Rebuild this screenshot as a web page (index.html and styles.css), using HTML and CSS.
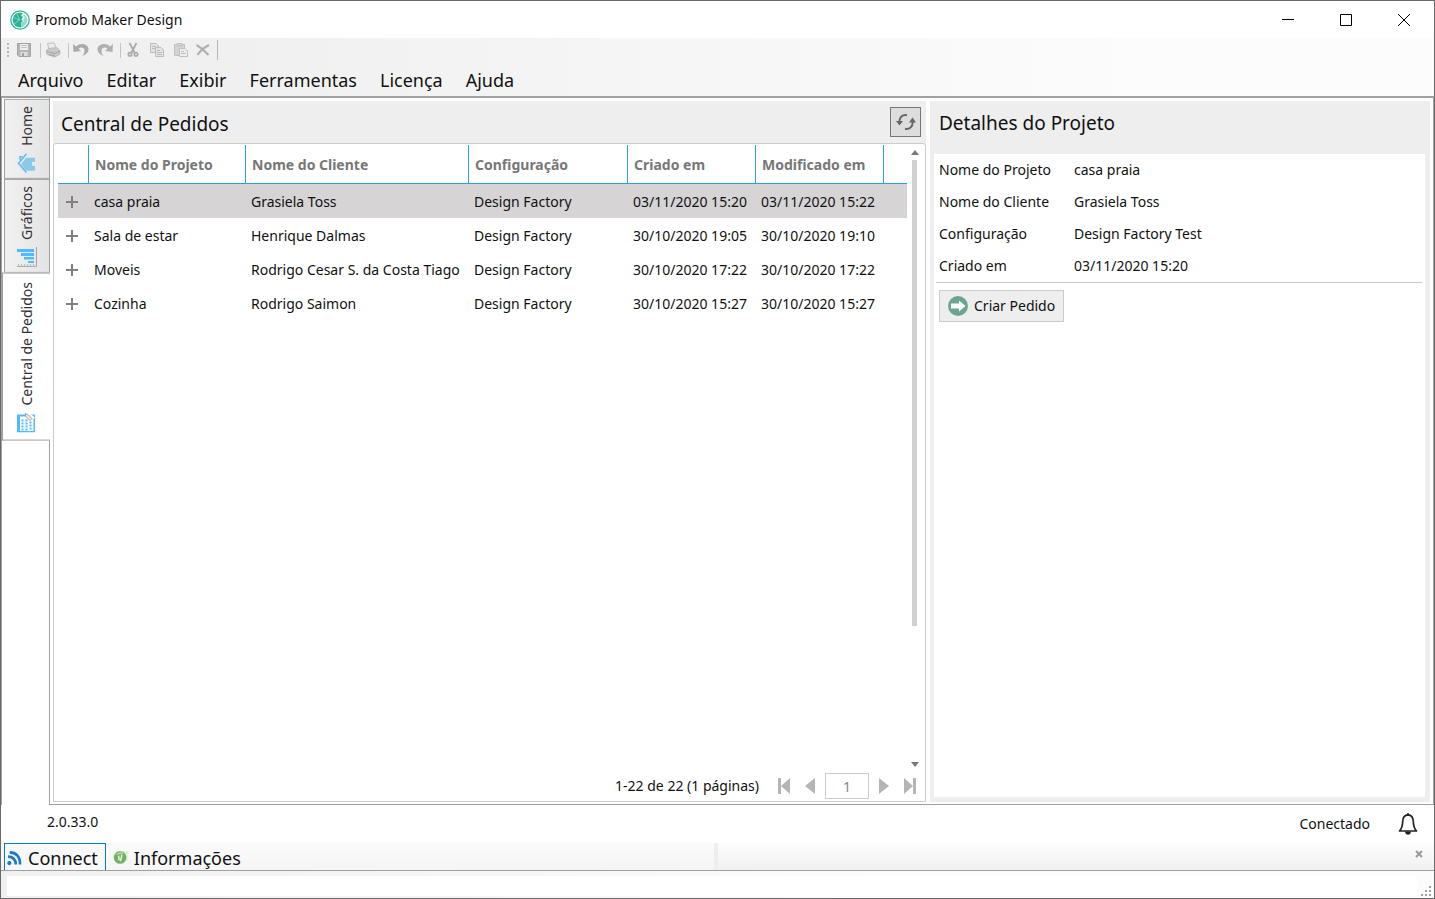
FILE: index.html
```
<!DOCTYPE html>
<html lang="pt-BR">
<head>
<meta charset="utf-8">
<title>Promob Maker Design</title>
<link rel="stylesheet" href="styles.css">
</head>
<body>
<div class="window">
  <header class="titlebar">
    <svg class="logo" viewBox="0 0 20 20"><circle cx="10" cy="10" r="9.200" fill="#fff" stroke="#2db79a" stroke-width="1.300"/><path d="M10 2.500A7.500 7.500 0 0 0 7.500 17L11 17.400V12.500L13 11.500L11.500 9.500L13 7L11 5.500L13 3.200Q11.500 2.500 10 2.500Z" fill="#27b496"/><path d="M14 4Q18 7 17 12Q15 17 11 17.400V12.500L14 11.500L13 9.500L15 7.500L13 6Z" fill="#8edccb"/><path d="M9.500 10L3.500 7.500M9.500 10L4 14M9.500 10L7 4" stroke="#8edccb" stroke-width=".8"/></svg>
    <h1 class="title">Promob Maker Design</h1>
    <div class="caption-buttons">
      <button class="caption" aria-label="Minimizar"><svg viewBox="0 0 12 12"><path d="M0 5.500H12" /></svg></button>
      <button class="caption" aria-label="Maximizar"><svg viewBox="0 0 12 12"><path d="M.5.5H11.500V11.500H.5Z"/></svg></button>
      <button class="caption" aria-label="Fechar"><svg viewBox="0 0 12 12"><path d="M0 0L12 12M12 0L0 12"/></svg></button>
    </div>
  </header>

  <div class="topbars">
    <div class="toolbar">
      <span class="grip"></span>
      <button class="tool save" aria-label="Salvar"><svg viewBox="0 0 16 16"><path d="M1.500 1.500H14.500V14.500H3L1.500 13Z" fill="#b5b5b5" stroke="#a3a3a3"/><path d="M4 2H12V8H4Z" fill="#eee"/><path d="M5 3.500H11M5 5.500H11" stroke="#c4c4c4"/><path d="M4.500 10H11.500V14H4.500Z" fill="#ddd"/><path d="M6 11H8V14H6Z" fill="#a0a0a0"/></svg></button>
      <span class="sep"></span>
      <button class="tool" aria-label="Imprimir"><svg viewBox="0 0 16 16"><path d="M4 7L2.500 1.500L9 .8L11.500 6.500Z" fill="#ececec" stroke="#c0c0c0"/><path d="M1 8.500L4 6.500L12 5.500L15 9V12L10 15L2 12.500Z" fill="#cacaca" stroke="#bbb"/><path d="M2 9.500L10 11.500L15 9M4 12.500L10 14" stroke="#a3a3a3" fill="none"/></svg></button>
      <span class="sep"></span>
      <button class="tool" aria-label="Desfazer"><svg viewBox="0 0 16 16"><path d="M0 2L.5 10L8 9L5.500 6.500C8 4.500 11.500 5.500 11.500 8.500C11.500 10.500 11 12 9.500 14C14 12 16 9.500 15.500 6.500C14.500 1.500 7 .5 3 4.500Z" fill="#aaa"/></svg></button>
      <button class="tool" aria-label="Refazer"><svg viewBox="0 0 16 16"><path d="M16 2L15.500 10L8 9L10.500 6.500C8 4.500 4.500 5.500 4.500 8.500C4.500 10.500 5 12 6.500 14C2 12 0 9.500.5 6.500C1.500 1.500 9 .5 13 4.500Z" fill="#b0b0b0"/></svg></button>
      <span class="sep"></span>
      <button class="tool" aria-label="Recortar"><svg viewBox="0 0 16 16" fill="none" stroke="#aaa"><path d="M4.500 1L9.800 11M11.500 1L6.200 11" stroke-width="1.800"/><circle cx="5" cy="12.300" r="1.700" stroke-width="1.700"/><circle cx="11" cy="12.300" r="1.700" stroke-width="1.700"/></svg></button>
      <button class="tool" aria-label="Copiar"><svg viewBox="0 0 16 16" fill="#e4e4e4" stroke="#bcbcbc"><path d="M1.500 1.500H7L9.500 4V10.500H1.500Z"/><path d="M3 4.500H7M3 6.500H8"/><path d="M6.500 5.500H12L14.500 8V14.500H6.500Z"/><path d="M8 8.500H11M8 10.500H13M8 12.500H13"/></svg></button>
      <button class="tool" aria-label="Colar"><svg viewBox="0 0 16 16" fill="#d4d4d4" stroke="#c0c0c0"><path d="M1.500 2.500H11.500V13.500H1.500Z"/><path d="M4 1.500H9V4H4Z"/><path d="M6.500 6.500H12L14.500 9V14.500H6.500Z" fill="#eee"/><path d="M8 9.500H11M8 11.500H13"/></svg></button>
      <button class="tool delete" aria-label="Excluir"><svg viewBox="0 0 16 16"><path d="M1.500 3C6 5.500 10 9 13.500 13M14 3C9 5.500 5 9 2.500 13" fill="none" stroke="#b0b0b0" stroke-width="2.200"/></svg></button>
      <span class="bar-end"></span>
    </div>
    <nav class="menu">
      <a href="#">Arquivo</a><a href="#">Editar</a><a href="#">Exibir</a><a href="#">Ferramentas</a><a href="#">Licença</a><a href="#">Ajuda</a>
    </nav>
  </div>

  <main class="workspace">
    <nav class="side">
      <button class="side-tab"><svg viewBox="0 0 20 20"><path d="M9 5H18V9H15V13H18V18H9L4 11.500Z" fill="#8bc9ec"/><path d="M9.500 1L1.500 10.500L9.500 20M3 7V4H5.500" fill="none" stroke="#62bbed" stroke-width="1.500"/></svg><span>Home</span></button>
      <button class="side-tab"><svg viewBox="0 0 20 20"><path d="M0 2H17V5H0ZM4 6H17V9H4ZM7 10H17V12.500H7ZM11 14H17V16H11Z" fill="#4fbaff"/><path d="M19.500 0V19.500H0" fill="none" stroke="#a5a5a5"/><path d="M1 18H18" stroke="#999" stroke-dasharray="1 2"/></svg><span>Gráficos</span></button>
      <button class="side-tab current"><svg viewBox="0 0 20 20"><path d="M1 2H19V20H1Z" fill="#4fbaff"/><path d="M4 4H17.500V18.500H4Z" fill="#fff"/><path d="M6.500 7V18M10.500 7V18M14.500 9V18" stroke="#4fbaff" stroke-width="2" stroke-dasharray="2 1"/><path d="M10 0L17 7" fill="none" stroke="#fff" stroke-width="5"/><path d="M9 1L10 4L14 8L16 6L12 2Z" fill="#eee" stroke="#999"/></svg><span>Central de Pedidos</span></button>
    </nav>

    <div class="content">
      <section class="orders">
        <div class="orders-head">
          <h2>Central de Pedidos</h2>
          <button class="refresh" aria-label="Atualizar"><svg viewBox="0 0 20 20"><path d="M11 3.300C6.500 2.200 3.200 5.500 3.300 10" fill="none" stroke="#666" stroke-width="2"/><path d="M0 9H7L3.500 13.500Z" fill="#666"/><path d="M9 16.700C13.500 17.800 16.800 14.500 16.700 10" fill="none" stroke="#666" stroke-width="2"/><path d="M13 10.500H20L16.500 5.500Z" fill="#666"/></svg></button>
        </div>
        <div class="orders-box">
          <div class="grid-area">
            <table>
              <colgroup><col class="c-plus"><col class="c-project"><col class="c-client"><col class="c-config"><col class="c-date"><col class="c-date"><col></colgroup>
              <thead><tr><th></th><th>Nome do Projeto</th><th>Nome do Cliente</th><th>Configuração</th><th>Criado em</th><th>Modificado em</th><th></th></tr></thead>
              <tbody>
                <tr class="selected"><td><button class="plus" aria-label="Expandir"></button></td><td>casa praia</td><td>Grasiela Toss</td><td>Design Factory</td><td>03/11/2020 15:20</td><td>03/11/2020 15:22</td><td></td></tr>
                <tr><td><button class="plus" aria-label="Expandir"></button></td><td>Sala de estar</td><td>Henrique Dalmas</td><td>Design Factory</td><td>30/10/2020 19:05</td><td>30/10/2020 19:10</td><td></td></tr>
                <tr><td><button class="plus" aria-label="Expandir"></button></td><td>Moveis</td><td>Rodrigo Cesar S. da Costa Tiago</td><td>Design Factory</td><td>30/10/2020 17:22</td><td>30/10/2020 17:22</td><td></td></tr>
                <tr><td><button class="plus" aria-label="Expandir"></button></td><td>Cozinha</td><td>Rodrigo Saimon</td><td>Design Factory</td><td>30/10/2020 15:27</td><td>30/10/2020 15:27</td><td></td></tr>
              </tbody>
            </table>
            <div class="scroll">
              <svg viewBox="0 0 8 5"><path d="M4 0L8 5H0Z"/></svg>
              <div class="track"><div class="thumb"></div></div>
              <svg viewBox="0 0 8 5"><path d="M4 5L8 0H0Z"/></svg>
            </div>
          </div>
          <div class="pager">
            <span class="pager-text">1-22 de 22 (1 páginas)</span>
            <button class="page" aria-label="Primeira página"><svg viewBox="0 0 12 16"><path d="M0 0H3V16H0ZM12 0V16L3 8Z"/></svg></button>
            <button class="page" aria-label="Página anterior"><svg viewBox="0 0 12 16"><path d="M11 0V16L1 8Z"/></svg></button>
            <input class="page-no" type="text" value="1" aria-label="Página">
            <button class="page" aria-label="Próxima página"><svg viewBox="0 0 12 16"><path d="M1 0V16L11 8Z"/></svg></button>
            <button class="page" aria-label="Última página"><svg viewBox="0 0 12 16"><path d="M9 0H12V16H9ZM0 0V16L9 8Z"/></svg></button>
          </div>
        </div>
      </section>

      <section class="details">
        <h2>Detalhes do Projeto</h2>
        <div class="details-box">
          <dl>
            <dt>Nome do Projeto</dt><dd>casa praia</dd>
            <dt>Nome do Cliente</dt><dd>Grasiela Toss</dd>
            <dt>Configuração</dt><dd>Design Factory Test</dd>
            <dt>Criado em</dt><dd>03/11/2020 15:20</dd>
          </dl>
          <button class="create"><svg viewBox="0 0 20 20"><circle cx="10" cy="10" r="10" fill="#6aa68f"/><path d="M3 7.500H11V4.500L17.500 10L11 15.500V12.500H3Z" fill="#fff"/></svg>Criar Pedido</button>
        </div>
      </section>
    </div>
  </main>

  <div class="status">
    <span class="version">2.0.33.0</span>
    <span class="connected">Conectado</span>
    <button class="bell" aria-label="Notificações"><svg viewBox="0 0 20 22"><path d="M10 1.800C6.300 2 4.800 5 4.700 8.500C4.600 13 3.800 15.500 1.500 18H18.500C16.200 15.500 15.400 13 15.300 8.500C15.200 5 13.700 2 10 1.800Z" fill="none" stroke="#222" stroke-width="1.700" stroke-linejoin="round"/><path d="M9 .3H11V2.200H9ZM7 18.500H13Q12.500 21.700 10 21.700T7 18.500Z" fill="#222"/></svg></button>
  </div>

  <div class="dock">
    <div class="dock-tabs">
      <button class="dock-tab active"><svg viewBox="0 0 14 14"><circle cx="2.200" cy="11.300" r="2" fill="#1979ca"/><path d="M1 5.300C5.500 5.300 8.200 8 8.200 12.500M2.500 1.300C8.500 1.300 12.200 5 12.200 12.500" fill="none" stroke="#1979ca" stroke-width="2.500"/></svg>Connect</button>
      <button class="dock-tab"><svg viewBox="0 0 16 16"><path d="M3 1H15.500V11L10 15Z" fill="#d9edcf"/><circle cx="7.500" cy="8" r="6.700" fill="#72b060"/><path d="M2.500 5Q6 .5 12 3.500Q8 5 2.500 5Z" fill="#b2d9a3"/><path d="M9.500 5L8 12M6 6L6.500 11" stroke="#e6f3e0" stroke-width="1.600"/></svg>Informações</button>
    </div>
    <div class="dock-rest"><button class="dock-close" aria-label="Fechar painel"><svg viewBox="0 0 8 8"><path d="M1 1L7 7M7 1L1 7"/></svg></button></div>
  </div>
  <footer class="foot">
    <div class="foot-field"></div>
    <svg class="resize" viewBox="0 0 10 10"><path d="M8 0H10V2H8ZM8 4H10V6H8ZM8 8H10V10H8ZM4 4H6V6H4ZM4 8H6V10H4ZM0 8H2V10H0Z" fill="#a0a0a0"/></svg>
  </footer>
</div>
</body>
</html>
```
FILE: styles.css
```
* { box-sizing: border-box; }
body {
  margin: 0;
  font-family: "Noto Sans", "Open Sans", sans-serif;
  font-size: 14px;
  line-height: 20px;
  color: #111;
  background: #fff;
}
button {
  font: inherit;
  color: inherit;
  background: none;
  border: 0;
  padding: 0;
  display: flex;
  align-items: center;
}
svg { display: block; flex: none; }
h1, h2 { margin: 0; font-weight: 400; }
a { color: inherit; text-decoration: none; }

.window {
  min-height: 100vh;
  display: flex;
  flex-direction: column;
  border: 1px solid #6b6869;
}

.titlebar { display: flex; align-items: center; height: 37px; padding-left: 9px; background: #fff; }
.logo { width: 20px; height: 20px; }
.title { flex: 1; margin-left: 5px; font-size: 14px; }
.caption-buttons { display: flex; padding-right: 1px; }
.caption { width: 58px; height: 36px; justify-content: center; }
.caption svg { width: 12px; height: 12px; fill: none; stroke: #000; stroke-width: 1; }

.topbars {
  background: linear-gradient(90deg, #f0f0f0 15%, #fcfcfc 80%);
  border-bottom: 2px solid #a0a0a0;
}
.toolbar { display: flex; align-items: center; height: 24px; padding-left: 6px; }
.grip {
  width: 2px;
  height: 14px;
  margin-right: 7px;
  background: repeating-linear-gradient(#b5b5b5 0 2px, transparent 2px 4px);
}
.tool { width: 24px; height: 24px; justify-content: center; }
.tool svg { width: 16px; height: 16px; }
.save { width: 16px; margin-right: 5px; }
.delete { width: 20px; margin-right: 4px; }
.sep { width: 1px; height: 15px; margin-left: 3px; background: #c4c4c4; }
.bar-end { width: 1px; height: 20px; background: #b5b5b5; }
.menu {
  display: flex;
  gap: 23px;
  height: 34px;
  padding: 5px 17px 0;
  font-size: 18px;
  line-height: 26px;
}

.workspace { flex: 1; display: flex; }
.side {
  flex: none;
  width: 49px;
  margin-right: -1px;
  padding-top: 1px;
  display: flex;
  flex-direction: column;
  align-items: flex-end;
  border-left: 1px solid #a0a0a0;
}
.side-tab {
  writing-mode: vertical-rl;
  transform: rotate(180deg);
  width: 46px;
  padding: 5px 0 6px;
  gap: 7px;
  border: 1px solid #a0a0a0;
  background: linear-gradient(90deg, #e4e4e4, #f1f1f1);
  color: #333;
}
.side-tab svg { width: 20px; height: 20px; transform: rotate(180deg); }
.side-tab.current { width: 48px; padding: 7px 3px 8px; background: #fff; border-left: 0; }

.content {
  flex: 1;
  display: grid;
  grid-template-columns: 873fr 500fr;
  gap: 4px;
  padding: 3px 3px 2px;
  border: 1px solid #a0a0a0;
  border-top: 0;
}
h2 { font-size: 19px; line-height: 26px; }
.orders { display: flex; flex-direction: column; background: #eee; min-width: 0; }
.orders-head { display: flex; align-items: center; justify-content: space-between; height: 42px; padding: 0 5px 0 8px; }
.orders-head h2 { padding-top: 4px; }
.refresh { width: 31px; height: 30px; justify-content: center; border: 1px solid #777; background: #ddd; }
.refresh svg { width: 20px; height: 20px; }
.orders-box {
  flex: 1;
  display: flex;
  flex-direction: column;
  padding: 1px 7px 1px 4px;
  background: #fff;
  border: 1px solid #ccc;
  border-radius: 3px 3px 0 0;
}
.grid-area { flex: 1; display: flex; align-items: stretch; gap: 4px; }
table { flex: 1; width: 100%; table-layout: fixed; border-collapse: separate; border-spacing: 0; align-self: flex-start; }
.c-plus { width: 31px; }
.c-project { width: 157px; }
.c-client { width: 223px; }
.c-config { width: 159px; }
.c-date { width: 128px; }
th, td { padding: 0 0 0 6px; text-align: left; white-space: nowrap; }
th {
  height: 39px;
  padding-top: 2px;
  color: #777;
  font-weight: 700;
  border-right: 1px solid #2ba0da;
  border-bottom: 1px solid #2ba0da;
}
th:last-child { border-right: 0; }
td { height: 34px; padding-top: 2px; }
td + td { padding-left: 5px; }
.selected td { background: #d6d4d5; }
.plus {
  width: 12px;
  height: 12px;
  margin-left: 2px;
  background:
    linear-gradient(#808080, #808080) center / 12px 2px no-repeat,
    linear-gradient(#808080, #808080) center / 2px 12px no-repeat;
}
.scroll { flex: none; width: 7px; display: flex; flex-direction: column; align-items: center; gap: 5px; padding: 5px 0; }
.scroll svg { width: 8px; height: 5px; fill: #777; }
.track { flex: 1; width: 5px; }
.thumb { height: 78%; background: #d0d0d0; }
.pager { display: flex; align-items: center; height: 28px; gap: 14px; padding-right: 2px; }
.pager-text { margin-left: auto; margin-right: 5px; }
.page svg { width: 12px; height: 16px; fill: #b5b5b5; }
.page-no {
  width: 44px;
  height: 26px;
  margin: 0 -5px;
  padding: 0;
  border: 1px solid #ccc;
  text-align: center;
  font: inherit;
  color: #888;
}

.details { display: flex; flex-direction: column; padding: 0 5px 5px 4px; background: #eee; }
.details h2 { padding: 9px 5px 18px; }
.details-box { flex: 1; background: #fff; padding: 0 3px 0 2px; }
dl {
  display: grid;
  grid-template-columns: 135px 1fr;
  margin: 0;
  padding-left: 3px;
  line-height: 32px;
  border-bottom: 1px solid #ccc;
}
dd { margin: 0; }
.create {
  height: 32px;
  margin: 7px 0 0 3px;
  padding: 0 8px;
  gap: 6px;
  border: 1px solid #ccc;
  background: #eee;
}
.create svg { width: 20px; height: 20px; }

.status { display: flex; align-items: center; height: 38px; padding: 0 15px 0 46px; }
.version { flex: 1; padding-bottom: 4px; }
.bell { margin-left: 27px; }
.bell svg { width: 22px; height: 22px; }

.dock { display: flex; height: 28px; border-bottom: 1px solid #a0a0a0; background: linear-gradient(#fdfdfd, #f0f0f0); }
.dock-tabs { flex: 0 0 50%; display: flex; padding-left: 3px; background: linear-gradient(#fbfbfb, #f5f5f5); border-right: 4px solid #eee; }
.dock-tab { padding: 2px 7px 0; font-size: 18px; gap: 6px; }
.dock-tab.active { border: 1px solid #0078d7; border-bottom: 0; background: #f8f8f8; padding-left: 2px; }
.dock-tab svg { width: 15px; height: 15px; }
.dock-rest { flex: 1; display: flex; justify-content: flex-end; padding: 7px 11px; }
.dock-close { height: 8px; }
.dock-close svg { width: 8px; height: 8px; stroke: #999; stroke-width: 2; }
.foot { display: flex; align-items: flex-end; height: 27px; padding: 5px 3px 2px 6px; background: linear-gradient(90deg, #f0f0f0, #fcfcfc 60%); }
.foot-field { flex: 1; height: 20px; background: #fff; }
.resize { width: 10px; height: 10px; margin-left: 4px; }
```
